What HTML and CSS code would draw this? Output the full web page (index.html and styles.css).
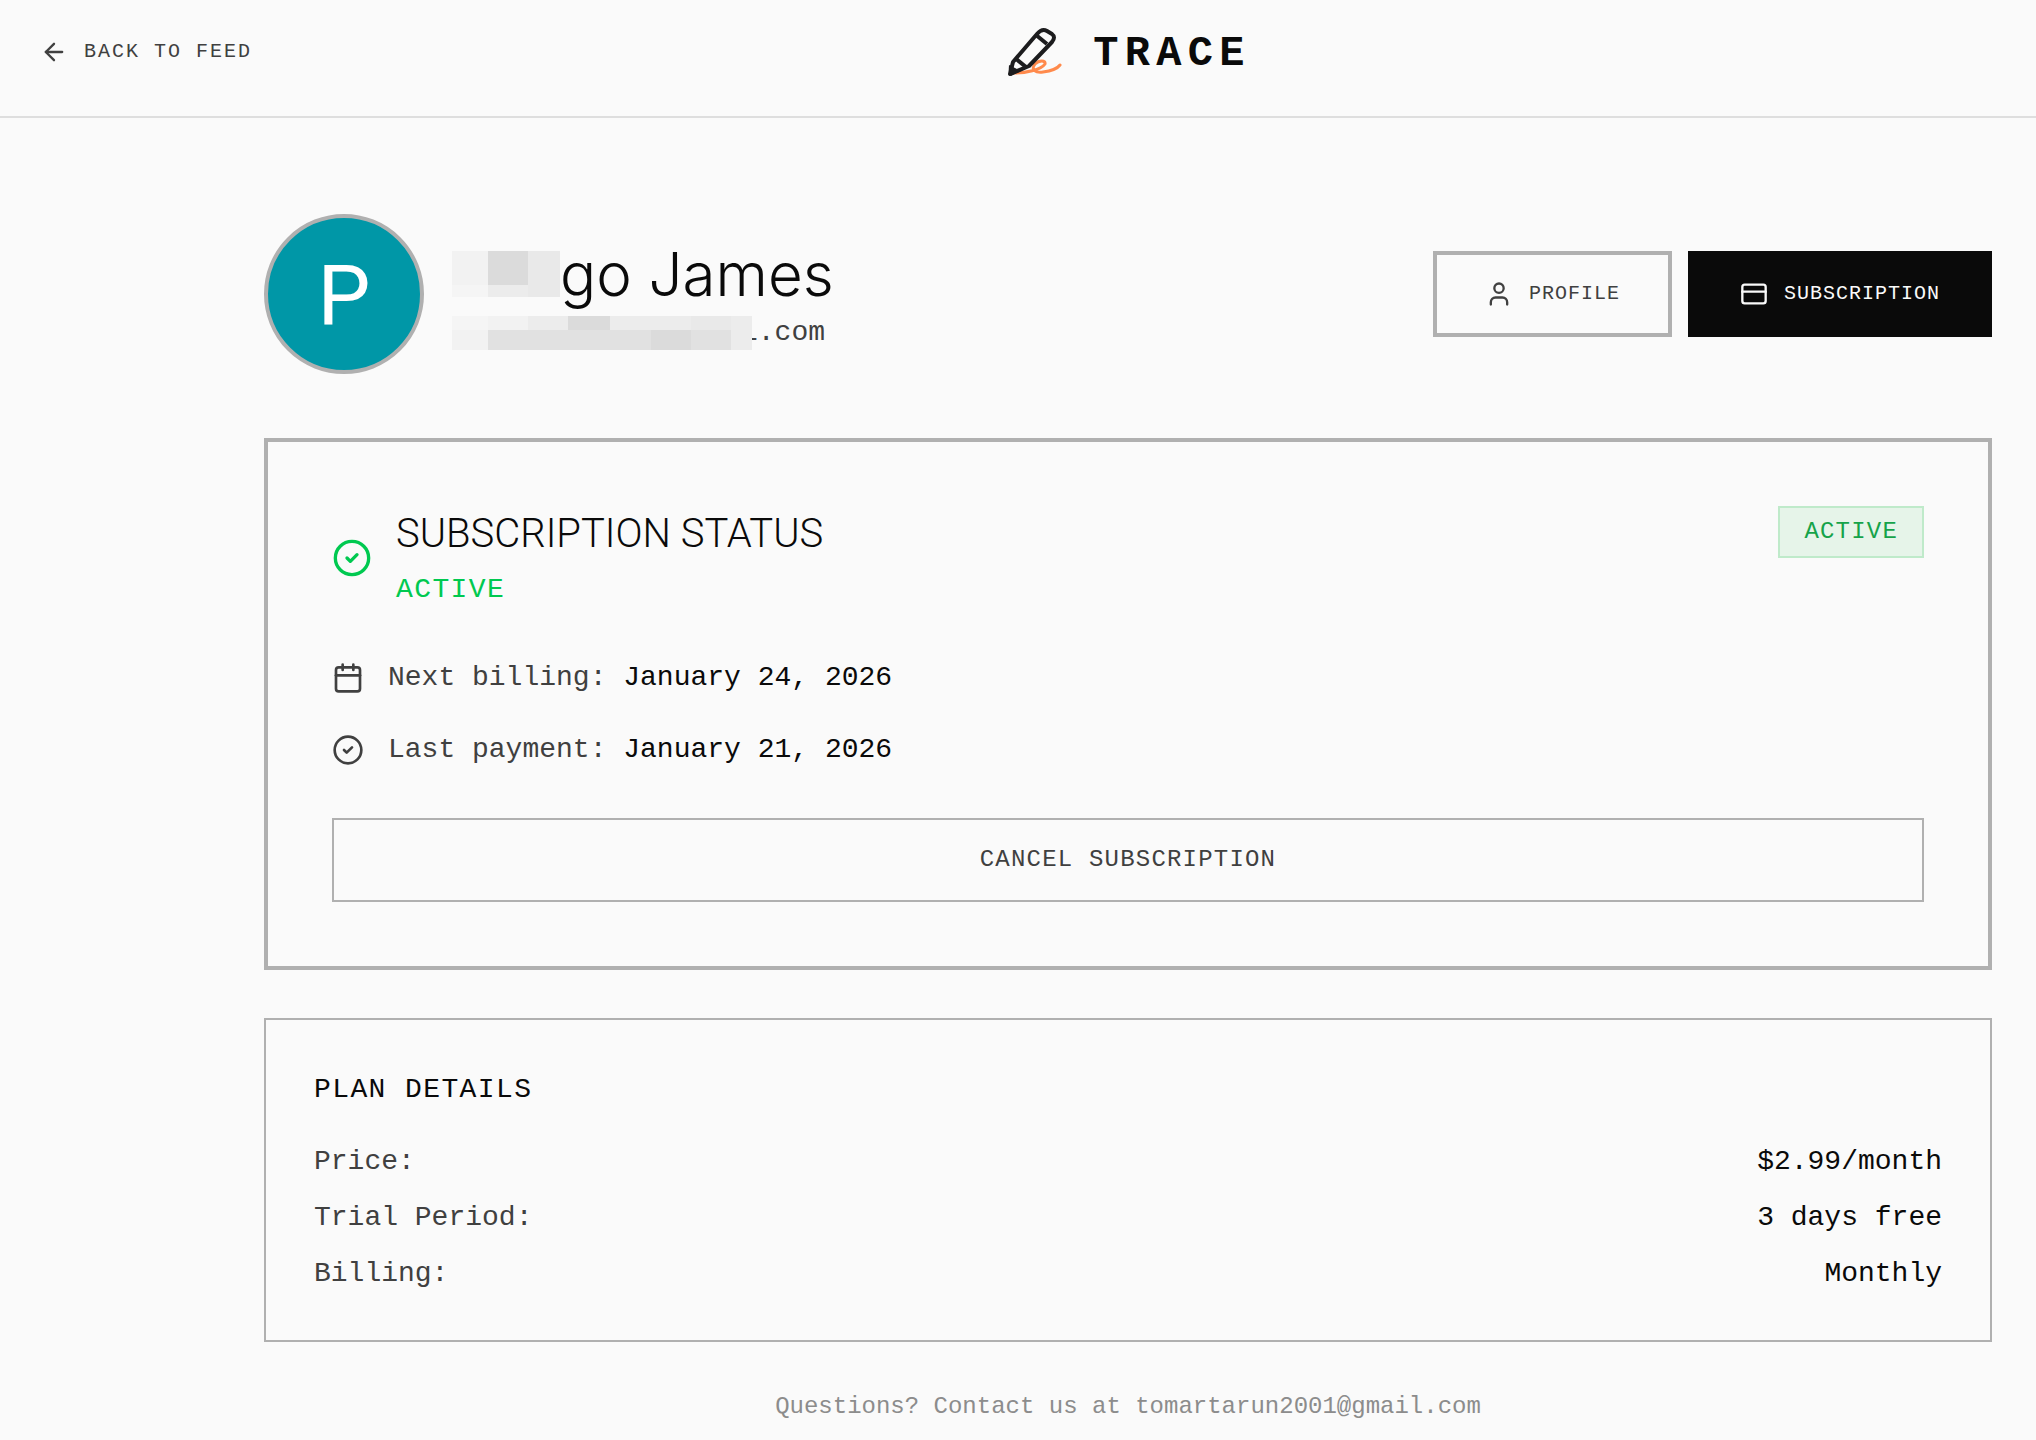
FILE: index.html
```html
<!DOCTYPE html>
<html lang="en">
<head>
    <meta charset="utf-8">
    <meta name="viewport" content="width=device-width, initial-scale=1">
    <title>Trace - Subscription</title>
    <link rel="stylesheet" href="styles.css">
</head>
<body>
    <header class="header">
        <a href="#feed" class="back-link">
            <svg class="icon icon-sm" viewBox="0 0 24 24" aria-hidden="true"><path d="m12 19-7-7 7-7"/><path d="M19 12H5"/></svg>
            <span>BACK TO FEED</span>
        </a>
        <div class="logo">
            <svg class="logo-img" viewBox="0 0 64 64" aria-hidden="true">
                <path class="squiggle" d="M10 53C20 53 36 50 40 44C41 40 34 40 30 44C25 50 31 53 38 52C46 51 52 49 55 45"/>
                <path class="pencil" d="M8 42L32 14Q37 8 42 11L47 14Q51 17 47 22L24 46L5 54Z"/>
                <path class="pencil" d="M31 15L42 24M10 38L21 47"/>
                <path class="pencil-tip" d="M4 45L16 51L6 56Q3 56 4 45Z"/>
            </svg>
            <span class="logo-text">TRACE</span>
        </div>
    </header>

    <main class="container">
        <section class="user">
            <div class="avatar">P</div>
            <div class="user-info">
                <h1 class="user-name">
                    <span class="mask mask-name"><i class="m2"></i><i class="m6"></i><i class="m4"></i><i class="m1"></i><i class="m3"></i><i class="m4"></i></span>go James
                </h1>
                <p class="user-email">
                    <span class="mask mask-email"><i class="m1"></i><i class="m2"></i><i class="m3"></i><i class="m6"></i><i class="m3"></i><i class="m3"></i><i class="m4"></i><i class="m3"></i><i class="m2"></i><i class="m5"></i><i class="m5"></i><i class="m5"></i><i class="m5"></i><i class="m6"></i><i class="m5"></i><i class="m3"></i></span>
                    <span class="email-end">l.com</span>
                </p>
            </div>
            <nav class="tabs">
                <button type="button" class="tab">
                    <svg class="icon icon-sm" viewBox="0 0 24 24" aria-hidden="true"><path d="M19 21v-2a4 4 0 0 0-4-4H9a4 4 0 0 0-4 4v2"/><circle cx="12" cy="7" r="4"/></svg>
                    <span>PROFILE</span>
                </button>
                <button type="button" class="tab tab-active">
                    <svg class="icon icon-sm" viewBox="0 0 24 24" aria-hidden="true"><rect x="2" y="4" width="20" height="16" rx="2"/><path d="M2 10h20"/></svg>
                    <span>SUBSCRIPTION</span>
                </button>
            </nav>
        </section>

        <section class="card status-card">
            <div class="status-head">
                <svg class="icon icon-lg green" viewBox="0 0 24 24" aria-hidden="true"><circle cx="12" cy="12" r="10"/><path d="m9 12 2 2 4-4"/></svg>
                <div>
                    <h2 class="status-title">SUBSCRIPTION STATUS</h2>
                    <p class="status-text green">ACTIVE</p>
                </div>
                <span class="badge">ACTIVE</span>
            </div>
            <div class="status-rows">
                <p class="status-row">
                    <svg class="icon" viewBox="0 0 24 24" aria-hidden="true"><path d="M8 2v4"/><path d="M16 2v4"/><rect x="3" y="4" width="18" height="18" rx="2"/><path d="M3 10h18"/></svg>
                    <span>Next billing: <span class="value">January 24, 2026</span></span>
                </p>
                <p class="status-row">
                    <svg class="icon" viewBox="0 0 24 24" aria-hidden="true"><circle cx="12" cy="12" r="10"/><path d="m9 12 2 2 4-4"/></svg>
                    <span>Last payment: <span class="value">January 21, 2026</span></span>
                </p>
            </div>
            <button type="button" class="cancel-btn">CANCEL SUBSCRIPTION</button>
        </section>

        <section class="card plan-card">
            <h3 class="plan-title">PLAN DETAILS</h3>
            <dl class="plan-list">
                <div class="plan-row"><dt>Price:</dt><dd class="value">$2.99/month</dd></div>
                <div class="plan-row"><dt>Trial Period:</dt><dd class="value">3 days free</dd></div>
                <div class="plan-row"><dt>Billing:</dt><dd class="value">Monthly</dd></div>
            </dl>
        </section>

        <p class="contact">Questions? Contact us at tomartarun2001@gmail.com</p>
    </main>
</body>
</html>
```
FILE: styles.css
```css
* {
    box-sizing: border-box;
    margin: 0;
    padding: 0;
}

body {
    background: #fafafa;
    color: #404040;
    font-family: "Liberation Mono", monospace;
    font-size: 28px;
    line-height: 40px;
}

button {
    font-family: inherit;
    color: inherit;
    background: none;
    cursor: pointer;
}

.icon {
    width: 32px;
    height: 32px;
    flex-shrink: 0;
    fill: none;
    stroke: currentColor;
    stroke-width: 2;
    stroke-linecap: round;
    stroke-linejoin: round;
}

.icon-sm {
    width: 28px;
    height: 28px;
}

.icon-lg {
    width: 40px;
    height: 40px;
}

.green {
    color: #00c950;
}

.value {
    color: #0a0a0a;
}

/* header */
.header {
    display: grid;
    grid-template-columns: 224px 1fr;
    align-items: center;
    padding: 20px 44px 32px 40px;
    border-bottom: 2px solid #dedede;
}

.back-link {
    display: flex;
    align-items: center;
    gap: 16px;
    color: inherit;
    font-size: 20px;
    letter-spacing: 0.1em;
    text-decoration: none;
    white-space: nowrap;
}

.logo {
    display: flex;
    align-items: center;
    justify-content: center;
    gap: 24px;
}

.logo-img {
    width: 64px;
    height: 64px;
}

.pencil {
    fill: none;
    stroke: #1c1c1e;
    stroke-width: 4;
    stroke-linejoin: round;
}

.pencil-tip {
    fill: #1c1c1e;
}

.squiggle {
    fill: none;
    stroke: #ff8a4c;
    stroke-width: 3;
    stroke-linecap: round;
}

.logo-text {
    padding-top: 4px;
    color: #0a0a0a;
    font-size: 42px;
    font-weight: bold;
    letter-spacing: 0.15em;
}

/* user */
.container {
    padding: 96px 44px 16px 264px;
}

.user {
    display: flex;
    align-items: center;
    gap: 28px;
    margin-bottom: 64px;
}

.avatar {
    display: flex;
    align-items: center;
    justify-content: center;
    width: 160px;
    height: 160px;
    padding-top: 4px;
    border: 4px solid #b0b0b0;
    border-radius: 50%;
    background: #0097a7;
    color: #fff;
    font-family: Roboto, sans-serif;
    font-size: 84px;
}

.user-name {
    display: flex;
    align-items: center;
    color: #0a0a0a;
    font-family: Inter, sans-serif;
    font-size: 60px;
    font-weight: 300;
    line-height: 78px;
}

.user-email {
    display: flex;
    align-items: center;
    line-height: 40px;
}

/* pixelated cover over the private part */
.mask {
    position: relative;
    z-index: 1;
    display: grid;
}

.mask-name {
    grid-template: 34px 12px / 36px 40px 32px;
}

.mask-email {
    grid-template: 14px 20px / 36px 40px 40px 42px 41px 40px 40px 21px;
}

.email-end {
    margin-left: -11px;
}

.m1 { background: #f5f5f5; }
.m2 { background: #f2f2f2; }
.m3 { background: #ececec; }
.m4 { background: #e9e9e9; }
.m5 { background: #e1e1e1; }
.m6 { background: #dbdbdb; }

.tabs {
    display: flex;
    gap: 16px;
    margin-left: auto;
}

.tab {
    display: flex;
    align-items: center;
    gap: 16px;
    padding: 24px 48px;
    border: 4px solid #b0b0b0;
    font-size: 20px;
    line-height: 30px;
    letter-spacing: 0.05em;
}

.tab-active {
    border-color: #0a0a0a;
    background: #0a0a0a;
    color: #fafafa;
}

/* cards */
.card {
    margin-bottom: 48px;
    border: 2px solid #b0b0b0;
}

.status-card {
    padding: 64px;
    border-width: 4px;
}

.status-head {
    display: flex;
    align-items: center;
    gap: 24px;
    margin-bottom: 48px;
}

.status-title {
    color: #0a0a0a;
    font-family: Roboto, sans-serif;
    font-size: 40px;
    font-weight: 300;
    line-height: 56px;
}

.status-text {
    margin-top: 8px;
    letter-spacing: 0.05em;
}

.badge {
    align-self: flex-start;
    margin-left: auto;
    padding: 8px 24px;
    border: 2px solid #bfeaca;
    background: #e6f4e9;
    color: #16a34a;
    font-size: 24px;
    line-height: 32px;
    letter-spacing: 0.05em;
}

.status-rows {
    display: grid;
    gap: 32px;
    margin-bottom: 48px;
}

.status-row {
    display: flex;
    align-items: center;
    gap: 24px;
}

.cancel-btn {
    display: block;
    width: 100%;
    padding: 20px;
    border: 2px solid #b0b0b0;
    font-size: 24px;
    line-height: 40px;
    letter-spacing: 0.05em;
}

.plan-card {
    padding: 50px 48px 46px;
}

.plan-title {
    margin-bottom: 32px;
    color: #0a0a0a;
    font-size: 28px;
    font-weight: normal;
    letter-spacing: 0.05em;
}

.plan-list {
    display: grid;
    gap: 16px;
}

.plan-row {
    display: flex;
    justify-content: space-between;
}

.contact {
    color: #8c8c8c;
    font-size: 24px;
    line-height: 34px;
    text-align: center;
}
```
